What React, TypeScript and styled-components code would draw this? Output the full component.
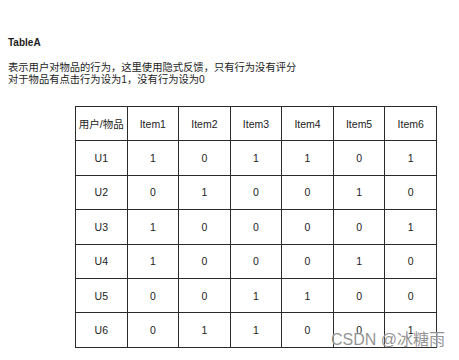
import React from 'react';
import styled, {createGlobalStyle} from 'styled-components';

const users = [
    {name: 'U1', values: [1, 0, 1, 1, 0, 1]},
    {name: 'U2', values: [0, 1, 0, 0, 1, 0]},
    {name: 'U3', values: [1, 0, 0, 0, 0, 1]},
    {name: 'U4', values: [1, 0, 0, 0, 1, 0]},
    {name: 'U5', values: [0, 0, 1, 1, 0, 0]},
    {name: 'U6', values: [0, 1, 1, 0, 0, 1]},
];

const items = ['Item1', 'Item2', 'Item3', 'Item4', 'Item5', 'Item6'];

function App() {
    return (
        <Page>
            <GlobalStyle/>
            <Title>TableA</Title>
            <Desc>
                表示用户对物品的行为，这里使用隐式反馈，只有行为没有评分<br/>
                对于物品有点击行为设为1，没有行为设为0
            </Desc>
            <Table>
                <thead>
                    <tr>
                        <Cell>用户/物品</Cell>
                        {items.map(item => <Cell key={item}>{item}</Cell>)}
                    </tr>
                </thead>
                <tbody>
                    {users.map(user => (
                        <tr key={user.name}>
                            <Cell>{user.name}</Cell>
                            {user.values.map((v, i) => <Cell key={i}>{v}</Cell>)}
                        </tr>
                    ))}
                </tbody>
            </Table>
            <Watermark>CSDN @冰糖雨</Watermark>
        </Page>
    );
}

const GlobalStyle = createGlobalStyle`
    html, body {
        margin: 0;
        background: #fff;
    }
`;

const Page = styled.div`
    position: relative;
    width: 459px;
    height: 360px;
    overflow: hidden;
    padding: 37px 8px 0;
    box-sizing: border-box;
    font-family: "Liberation Sans", Arial, "Noto Sans CJK SC", sans-serif;
    color: #1c1c1c;
`;

const Title = styled.div`
    font-size: 10px;
    font-weight: bold;
    line-height: 12px;
`;

const Desc = styled.div`
    margin-top: 13px;
    font-size: 10.3px;
    line-height: 12px;
`;

const Table = styled.table`
    margin: 20px 0 0 67px;
    border-collapse: collapse;
    width: 362px;
    table-layout: fixed;
`;

const Cell = styled.td`
    border: 1px solid #2a2a2a;
    height: 33.4px;
    padding: 0;
    text-align: center;
    font-size: 10.5px;
    font-weight: normal;
    color: #222;
`;

// CSDN watermark stamped over the bottom-right corner of the screenshot
const Watermark = styled.div`
    position: absolute;
    right: 14px;
    bottom: 10px;
    font-size: 16px;
    font-family: "Liberation Sans", "Noto Sans CJK SC", sans-serif;
    color: rgba(110, 110, 110, 0.75);
    text-shadow: 0 0 1px #fff;
`;

export default App;
